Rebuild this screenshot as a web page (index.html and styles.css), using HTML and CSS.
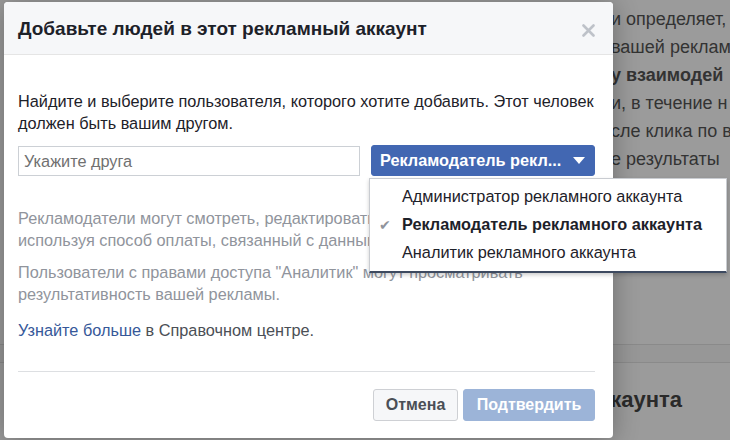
FILE: index.html
```html
<!DOCTYPE html>
<html lang="ru">
<head>
<meta charset="UTF-8" />
<meta name="viewport" content="width=device-width, initial-scale=1" />
<title>Добавьте людей</title>
<link rel="stylesheet" href="styles.css">
</head>
<body>

<div class="fundo">
  <div class="fundo-texto">
    <div>и определяет,</div>
    <div>вашей реклам</div>
    <div class="negrito">у взаимодей</div>
    <div>и, в течение н</div>
    <div>сле клика по в</div>
    <div>е результаты</div>
  </div>
  <div class="fundo-faixa"></div>
  <div class="fundo-titulo">аккаунта</div>
</div>

<div class="dialogo">
  <div class="cabecalho">
    <span class="titulo">Добавьте людей в этот рекламный аккаунт</span>
    <svg class="fechar" width="13" height="13" viewBox="0 0 13 13">
      <path d="M1.5 1.5 L11.5 11.5 M11.5 1.5 L1.5 11.5" stroke="#bec2c9" stroke-width="2.6" stroke-linecap="round" fill="none"/>
    </svg>
  </div>

  <div class="corpo">
    <p class="intro">Найдите и выберите пользователя, которого хотите добавить. Этот человек должен быть вашим другом.</p>

    <div class="linha">
      <input class="campo" type="text" placeholder="Укажите друга">
      <div class="seletor">
        <button class="botao-papel">Рекламодатель рекл... <span class="seta"></span></button>
        <ul class="menu">
          <li>Администратор рекламного аккаунта</li>
          <li class="ativo"><span class="check">&#x2714;</span>Рекламодатель рекламного аккаунта</li>
          <li>Аналитик рекламного аккаунта</li>
        </ul>
      </div>
    </div>

    <p class="info">Рекламодатели могут смотреть, редактировать и создавать рекламу, используя способ оплаты, связанный с данным аккаунтом.</p>
    <p class="info">Пользователи с правами доступа "Аналитик" могут просматривать результативность вашей рекламы.</p>
    <p class="ajuda"><a href="#">Узнайте больше</a> в Справочном центре.</p>
  </div>

  <div class="rodape">
    <button class="btn-cancelar">Отмена</button>
    <button class="btn-confirmar" disabled>Подтвердить</button>
  </div>
</div>

</body>
</html>
```

FILE: styles.css
```css
* {
  box-sizing: border-box;
}
body {
  margin: 0;
  width: 730px;
  height: 440px;
  overflow: hidden;
  background: #9b9b9b;
  font-family: "Liberation Sans", Arial, sans-serif;
  color: #1d2129;
}

/* Página atrás do overlay */
.fundo {
  padding-left: 611px;
  color: #333;
  overflow: hidden;
}
.fundo-texto {
  padding-top: 5px;
  font-size: 18px;
  line-height: 28px;
  white-space: nowrap;
}
.negrito {
  font-weight: bold;
}
.fundo-faixa {
  margin: 171px 0 0 -611px;
  height: 19px;
  border-top: 1px solid #8a8a8a;
  border-bottom: 1px solid #8a8a8a;
  background: #979797;
}
.fundo-titulo {
  margin: 24px 0 0 -24px;
  font-size: 22px;
  font-weight: bold;
  color: #2a2a2a;
  white-space: nowrap;
}

/* Diálogo */
.dialogo {
  position: absolute;
  left: 4px;
  top: 2px;
  width: 609px;
  height: 436px;
  background: #fff;
  border-radius: 4px;
  box-shadow: 0 2px 26px rgba(0, 0, 0, .3);
  display: flex;
  flex-direction: column;
}
.cabecalho {
  height: 53px;
  background: #f6f7f9;
  border-bottom: 1px solid #e5e5e5;
  border-radius: 4px 4px 0 0;
  padding: 0 18px 0 14px;
  display: flex;
  align-items: center;
  justify-content: space-between;
}
.titulo {
  font-size: 19px;
  font-weight: bold;
  color: #1d2129;
  padding-top: 1px;
}
.fechar {
  margin-top: 4px;
}

.corpo {
  padding: 35px 18px 0 14px;
  font-size: 16.3px;
  line-height: 22px;
}
.corpo p {
  margin: 0;
}
.intro {
  color: #1d2129;
}
.linha {
  display: flex;
  gap: 11px;
  margin-top: 11px;
  margin-bottom: 31px;
}
.campo {
  width: 342px;
  height: 30px;
  margin-top: 1px;
  border: 1px solid #ccd0d5;
  padding: 0 5px;
  font: 16.3px "Liberation Sans", Arial, sans-serif;
  color: #1d2129;
  outline: none;
}
.campo::placeholder {
  color: #707070;
}
.seletor {
  position: relative;
  flex: 1;
}
.botao-papel {
  width: 100%;
  height: 31px;
  background: #4267b2;
  border: 1px solid #4267b2;
  border-radius: 3px;
  color: #fff;
  font: bold 16.3px "Liberation Sans", Arial, sans-serif;
  text-align: left;
  padding: 0 8px;
  display: flex;
  align-items: center;
  justify-content: space-between;
}
.seta {
  width: 0;
  height: 0;
  border-left: 6px solid transparent;
  border-right: 6px solid transparent;
  border-top: 7px solid #fff;
  margin-right: 1px;
}
.menu {
  position: absolute;
  left: -2px;
  top: 33px;
  width: 358px;
  margin: 0;
  padding: 3px 0 5px;
  list-style: none;
  background: #fff;
  border: 1px solid #c9ccd1;
  border-bottom: 2px solid #3d4a60;
  box-shadow: 0 2px 4px rgba(0, 0, 0, .2);
  z-index: 2;
}
.menu li {
  position: relative;
  padding-left: 32px;
  line-height: 28px;
  color: #1d2129;
  white-space: nowrap;
}
.menu .ativo {
  font-weight: bold;
}
.check {
  position: absolute;
  left: 9px;
  top: 1px;
  color: #90949c;
  font-size: 14px;
  font-weight: normal;
}

.info {
  color: #90949c;
  margin-bottom: 10px !important;
}
.info + .info {
  margin-bottom: 14px !important;
}
.ajuda {
  color: #4b4f56;
}
.ajuda a {
  color: #365899;
  text-decoration: none;
}

.rodape {
  margin: 30px 18px 0 14px;
  border-top: 1px solid #dddfe2;
  padding-top: 17px;
  display: flex;
  justify-content: flex-end;
  gap: 5px;
}
.rodape button {
  height: 32px;
  border-radius: 3px;
  font: bold 16px "Liberation Sans", Arial, sans-serif;
  padding: 0 8px;
}
.btn-cancelar {
  width: 85px;
  background: #f6f7f9;
  border: 1px solid #ced0d4;
  color: #4b4f56;
}
.btn-confirmar {
  width: 132px;
  background: #9cb4d8;
  border: 1px solid #9cb4d8;
  color: #fff;
}
```
